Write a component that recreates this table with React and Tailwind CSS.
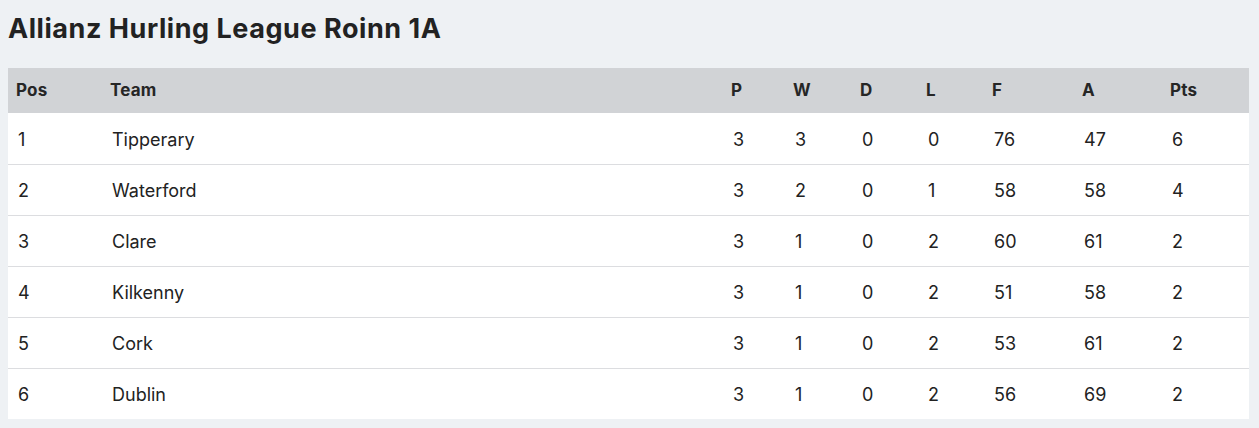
import React from "react";

const rows = [
  ["1", "Tipperary", "3", "3", "0", "0", "76", "47", "6"],
  ["2", "Waterford", "3", "2", "0", "1", "58", "58", "4"],
  ["3", "Clare", "3", "1", "0", "2", "60", "61", "2"],
  ["4", "Kilkenny", "3", "1", "0", "2", "51", "58", "2"],
  ["5", "Cork", "3", "1", "0", "2", "53", "61", "2"],
  ["6", "Dublin", "3", "1", "0", "2", "56", "69", "2"],
];

const heads = ["Pos", "Team", "P", "W", "D", "L", "F", "A", "Pts"];

export default function App() {
  return (
    <div
      className="w-[1259px] h-[428px] bg-[#eef1f4] px-2 text-[#222222]"
      style={{ fontFamily: "Inter, 'Open Sans', Arial, sans-serif" }}
    >
      <h1 className="pt-[13px] pb-[23px] text-[27px] leading-[32px] font-bold tracking-[0.55px] text-[#222222]">
        Allianz Hurling League Roinn 1A
      </h1>
      <table className="w-[1241px] table-fixed border-collapse bg-white">
        <colgroup>
          <col className="w-[94px]" />
          <col className="w-[621px]" />
          <col className="w-[62px]" />
          <col className="w-[67px]" />
          <col className="w-[66px]" />
          <col className="w-[66px]" />
          <col className="w-[90px]" />
          <col className="w-[88px]" />
          <col className="w-[87px]" />
        </colgroup>
        <thead>
          <tr className="h-[45px] bg-[#d1d3d6]">
            {heads.map((h) => (
              <th
                key={h}
                className="pl-2 text-left text-[17px] font-bold tracking-[0.2px] text-[#262626] align-middle"
              >
                {h}
              </th>
            ))}
          </tr>
        </thead>
        <tbody>
          {rows.map((r, i) => (
            <tr
              key={i}
              className={
                "h-[51px] " +
                (i < rows.length - 1 ? "border-b border-[#dcdde0]" : "")
              }
            >
              {r.map((c, j) => (
                <td
                  key={j}
                  className="pl-[10px] pt-[2px] text-left text-[18px] text-[#222222] align-middle"
                >
                  {c}
                </td>
              ))}
            </tr>
          ))}
        </tbody>
      </table>
    </div>
  );
}
